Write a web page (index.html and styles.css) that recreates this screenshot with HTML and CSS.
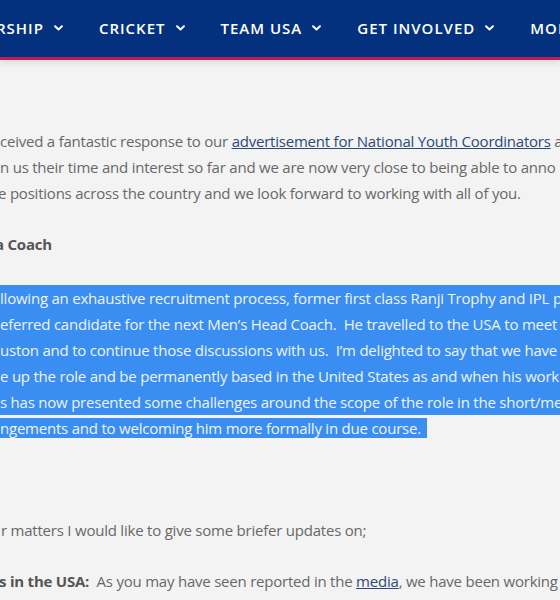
FILE: index.html
```html
<!DOCTYPE html>
<html lang="en">
<head>
<meta charset="utf-8">
<title>USA Cricket update</title>
<link rel="stylesheet" href="styles.css">
</head>
<body>
<header class="topbar">
  <nav class="menu">
    <a class="menu-item first">RSHIP <svg class="chev" viewBox="0 0 10 6"><polyline points="1.2,1 5,4.6 8.8,1"/></svg></a>
    <a class="menu-item">CRICKET <svg class="chev" viewBox="0 0 10 6"><polyline points="1.2,1 5,4.6 8.8,1"/></svg></a>
    <a class="menu-item">TEAM USA <svg class="chev" viewBox="0 0 10 6"><polyline points="1.2,1 5,4.6 8.8,1"/></svg></a>
    <a class="menu-item">GET INVOLVED <svg class="chev" viewBox="0 0 10 6"><polyline points="1.2,1 5,4.6 8.8,1"/></svg></a>
    <a class="menu-item">MORE</a>
  </nav>
</header>
<main class="article">
  <p class="para">
    <span class="line l1">ceived a fantastic response to our <a class="link">advertisement for National Youth Coordinators</a> a</span>
    <span class="line l2">n us their time and interest so far and we are now very close to being able to anno</span>
    <span class="line l3">e positions across the country and we look forward to working with all of you.</span>
  </p>
  <p class="para heading"><span class="line l4">a Coach</span></p>
  <p class="para selected">
    <span class="line sel">llowing an exhaustive recruitment process, former first class Ranji Trophy and IPL p</span>
    <span class="line sel">eferred candidate for the next Men’s Head Coach.&nbsp; He travelled to the USA to meet a</span>
    <span class="line sel">uston and to continue those discussions with us.&nbsp; I’m delighted to say that we have</span>
    <span class="line sel">e up the role and be permanently based in the United States as and when his work</span>
    <span class="line sel">s has now presented some challenges around the scope of the role in the short/me</span>
    <span class="line"><span class="sel-last">ngements and to welcoming him more formally in due course.</span></span>
  </p>
  <p class="para empty">&nbsp;</p>
  <p class="para"><span class="line l5">r matters I would like to give some briefer updates on;</span></p>
  <p class="para"><span class="line l6"><strong class="bold">s in the USA:</strong>&nbsp; As you may have seen reported in the <a class="link">media</a>, we have been working a</span></p>
</main>
</body>
</html>
```
FILE: styles.css
```css
html, body {
  margin: 0;
  padding: 0;
}
body {
  width: 560px;
  height: 600px;
  overflow: hidden;
  background: #f3f3f3;
  font-family: "Open Sans", "Liberation Sans", sans-serif;
}
.topbar {
  height: 57px;
  background: #03317e;
  border-bottom: 3px solid #c01a4f;
  box-shadow: 0 2px 8px rgba(0, 0, 0, 0.12);
  position: relative;
}
.menu {
  display: flex;
  align-items: center;
  height: 56px;
  gap: 36px;
  white-space: nowrap;
}
.menu-item {
  display: flex;
  align-items: center;
  gap: 10px;
  color: #ffffff;
  font-weight: 600;
  font-size: 15px;
  letter-spacing: 1px;
  text-decoration: none;
}
.menu-item.first {
  margin-left: -4px;
}
.chev {
  width: 9px;
  height: 6px;
  fill: none;
  stroke: #ffffff;
  stroke-width: 2.2;
  stroke-linecap: round;
  stroke-linejoin: round;
}
.article {
  padding-top: 68px;
  color: #686868;
  font-size: 15px;
  line-height: 26px;
  letter-spacing: -0.22px;
}
.para {
  margin: 0 0 25px;
}
.line {
  display: block;
  white-space: nowrap;
}
.l1 { padding-left: 0; }
.l2 { padding-left: 0; }
.l3 { margin-left: -2px; }
.heading {
  font-weight: 700;
  color: #555555;
}
.l4 { margin-left: -5px; }
.selected {
  margin-top: 28px;
  color: #eef4ff;
}
.sel {
  background: #3a8ef2;
}
.sel-last {
  background: #3a8ef2;
  padding-right: 6px;
}
.link {
  color: #2c4a78;
  text-decoration: underline;
}
.bold {
  font-weight: 700;
  color: #555555;
}
.l5 { padding-left: 1px; }
.l6 { margin-left: -1px; }
```
